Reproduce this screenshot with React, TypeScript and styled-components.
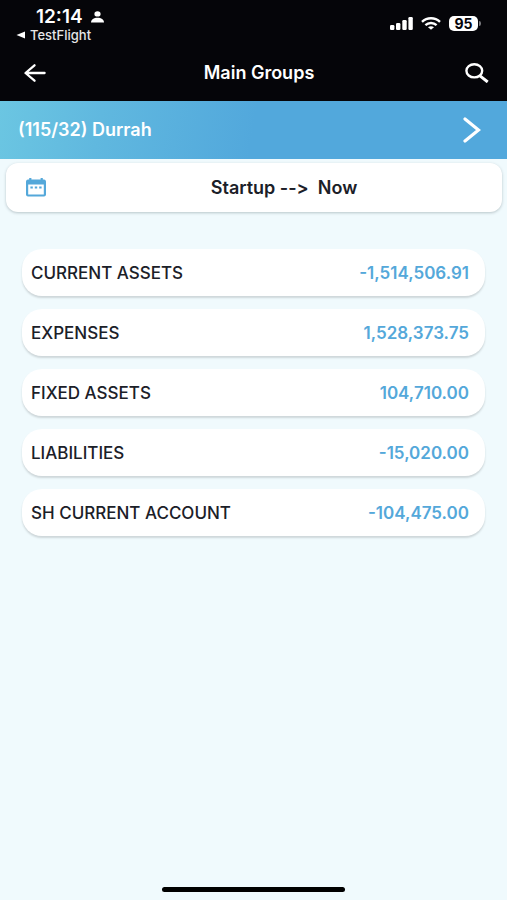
import React from 'react';
import styled, { createGlobalStyle } from 'styled-components';

const GlobalStyle = createGlobalStyle`
  * { box-sizing: border-box; }
  body {
    margin: 0;
    background: #f0fafd;
    font-family: Inter, "Liberation Sans", sans-serif;
    color: #1b2028;
  }
  svg { display: block; }
`;

const PlainButton = styled.button`
  margin: 0;
  padding: 0;
  border: 0;
  background: none;
  font: inherit;
  color: inherit;
  cursor: pointer;
`;

const Screen = styled.div`
  display: flex;
  flex-direction: column;
  min-height: 100vh;
`;

const TopArea = styled.header`
  background: #050509;
  color: #fff;
`;

const StatusBar = styled.div`
  display: flex;
  justify-content: space-between;
  align-items: flex-start;
  height: 45px;
  padding: 7px 26px 0 16px;
`;

const StatusLeft = styled.div`
  display: flex;
  flex-direction: column;
`;

const Clock = styled.div`
  display: flex;
  align-items: center;
  gap: 8px;
  padding-left: 20px;
  font-size: 19px;
  line-height: 20px;
  font-weight: 600;
`;

const BackToApp = styled(PlainButton)`
  display: flex;
  align-items: center;
  gap: 5px;
  font-size: 13px;
  line-height: 16px;
  font-weight: 500;
  color: #e6e6e8;
`;

const StatusRight = styled.div`
  display: flex;
  align-items: center;
  gap: 8px;
  padding-top: 9px;
`;

const Battery = styled.div`
  display: flex;
  align-items: center;
  gap: 1px;
`;

const BatteryLevel = styled.span`
  width: 29px;
  border-radius: 5px;
  background: #fff;
  color: #050509;
  font-size: 14px;
  line-height: 15px;
  font-weight: 700;
  text-align: center;
`;

const BatteryTip = styled.span`
  width: 2px;
  height: 5px;
  border-radius: 0 2px 2px 0;
  background: #77777b;
`;

const NavBar = styled.nav`
  display: grid;
  grid-template-columns: 40px 1fr 40px;
  align-items: center;
  height: 56px;
  padding: 0 10px 0 15px;
`;

const IconButton = styled(PlainButton)`
  display: flex;
  align-items: center;
  justify-content: center;
  height: 40px;
`;

const Title = styled.h1`
  margin: 0;
  padding-left: 6px;
  font-size: 18px;
  line-height: 24px;
  font-weight: 600;
  text-align: center;
`;

const AccountBanner = styled(PlainButton)`
  display: flex;
  align-items: center;
  justify-content: space-between;
  height: 58px;
  padding: 0 26px 0 18px;
  color: #fff;
  background: linear-gradient(100deg, #6bc6e2 0%, #60b8df 20%, #52a8dc 50%, #52a8dc 100%);
`;

const AccountName = styled.span`
  font-size: 18px;
  line-height: 24px;
  font-weight: 600;
`;

const PeriodCard = styled(PlainButton)`
  display: grid;
  grid-template-columns: 22px 1fr;
  align-items: center;
  height: 49px;
  margin: 4px 5px 0 6px;
  padding: 0 20px 0 20px;
  border-radius: 12px;
  background: #fff;
  box-shadow: 0 1px 3px rgba(40, 60, 70, 0.28);
`;

const Period = styled.span`
  padding-left: 38px;
  font-size: 18px;
  line-height: 24px;
  font-weight: 600;
  font-feature-settings: "calt" 0;
  text-align: center;
  white-space: pre;
`;

const GroupList = styled.ul`
  display: flex;
  flex-direction: column;
  gap: 13px;
  margin: 0;
  padding: 37px 22px 24px;
  list-style: none;
`;

const GroupRow = styled(PlainButton)`
  display: flex;
  align-items: center;
  justify-content: space-between;
  width: 100%;
  height: 47px;
  padding: 0 16px 0 9px;
  border-radius: 20px;
  background: #fff;
  box-shadow: 0 2px 2px rgba(40, 50, 50, 0.17);
`;

const GroupName = styled.span`
  font-size: 17px;
  line-height: 24px;
  font-weight: 500;
`;

const Amount = styled.span`
  font-size: 17px;
  line-height: 24px;
  font-weight: 600;
  color: #54a8da;
`;

const HomeIndicator = styled.div`
  width: 36%;
  height: 5px;
  margin: auto auto 8px;
  border-radius: 3px;
  background: #000;
`;

const groups = [
  { name: 'CURRENT ASSETS', amount: '-1,514,506.91' },
  { name: 'EXPENSES', amount: '1,528,373.75' },
  { name: 'FIXED ASSETS', amount: '104,710.00' },
  { name: 'LIABILITIES', amount: '-15,020.00' },
  { name: 'SH CURRENT ACCOUNT', amount: '-104,475.00' },
];

const PersonIcon = () => (
  <svg width="13" height="12" viewBox="0 0 13 12" fill="#fff" aria-hidden="true">
    <ellipse cx="6.5" cy="2.9" rx="3.1" ry="2.7" />
    <path d="M0 11.6C0 8.4 2.8 6.8 6.5 6.8S13 8.4 13 11.6Z" />
  </svg>
);

const BackTriangle = () => (
  <svg width="9" height="8" viewBox="0 0 9 8" fill="#fff" aria-hidden="true">
    <path d="M0.5 4 9 0.4V7.6Z" />
  </svg>
);

const SignalIcon = () => (
  <svg width="23" height="13" viewBox="0 0 23 13" fill="#fff" aria-hidden="true">
    <rect x="0" y="8" width="4.4" height="5" rx="1.2" />
    <rect x="6" y="6" width="4.4" height="7" rx="1.2" />
    <rect x="12.3" y="3" width="4.4" height="10" rx="1.2" />
    <rect x="18.4" y="0" width="4.4" height="13" rx="1.2" />
  </svg>
);

const WifiIcon = () => (
  <svg width="20" height="13" viewBox="0 0 20 13" fill="none" stroke="#fff" strokeWidth="2.4" aria-hidden="true">
    <path d="M1 4.9C6 .1 14 .1 19 4.9" />
    <path d="M4.4 8.2C7.6 5.2 12.4 5.2 15.6 8.2" />
    <path d="M10 12.8 7 10.3C8.7 8.8 11.3 8.8 13 10.3Z" fill="#fff" stroke="none" />
  </svg>
);

const ArrowLeftIcon = () => (
  <svg width="22" height="18" viewBox="0 0 22 18" fill="none" stroke="#fff" strokeWidth="2.3" strokeLinecap="round" strokeLinejoin="round" aria-hidden="true">
    <path d="M10.5 1.3 1.5 9 10.5 16.7M1.8 9H20.6" />
  </svg>
);

const SearchIcon = () => (
  <svg width="24" height="20" viewBox="0 0 24 20" fill="none" stroke="#fff" aria-hidden="true">
    <ellipse cx="9.3" cy="7.8" rx="7.9" ry="6.6" strokeWidth="2.4" />
    <path d="M15 12.8 22.7 19" strokeWidth="3" />
  </svg>
);

const ChevronIcon = () => (
  <svg width="18" height="26" viewBox="0 0 18 26" fill="none" stroke="#fff" strokeWidth="3.2" strokeLinecap="round" strokeLinejoin="miter" aria-hidden="true">
    <path d="M2 2 15.5 13 2 24" />
  </svg>
);

const CalendarIcon = () => (
  <svg width="20" height="19" viewBox="0 0 20 19" aria-hidden="true">
    <path fill="#54a8da" fillRule="evenodd" d="M3.2 0H5.4V1.6H14.6V0H16.8V1.6H18A2 2 0 0 1 20 3.4V16.7A2 2 0 0 1 18 18.5H2A2 2 0 0 1 0 16.7V3.4A2 2 0 0 1 2 1.6H3.2ZM2.2 6.4V16.5H17.8V6.4Z" />
    <path fill="#54a8da" d="M4.4 8.5H6.8V10.4H4.4ZM8.8 8.5H11.2V10.4H8.8ZM13.2 8.5H15.6V10.4H13.2Z" />
  </svg>
);

export default function App() {
  return (
    <Screen>
      <GlobalStyle />
      <TopArea>
        <StatusBar>
          <StatusLeft>
            <Clock>12:14<PersonIcon /></Clock>
            <BackToApp><BackTriangle />TestFlight</BackToApp>
          </StatusLeft>
          <StatusRight>
            <SignalIcon />
            <WifiIcon />
            <Battery><BatteryLevel>95</BatteryLevel><BatteryTip /></Battery>
          </StatusRight>
        </StatusBar>
        <NavBar>
          <IconButton aria-label="Back"><ArrowLeftIcon /></IconButton>
          <Title>Main Groups</Title>
          <IconButton aria-label="Search"><SearchIcon /></IconButton>
        </NavBar>
      </TopArea>
      <AccountBanner>
        <AccountName>(115/32) Durrah</AccountName>
        <ChevronIcon />
      </AccountBanner>
      <PeriodCard>
        <CalendarIcon />
        <Period>{'Startup -->  Now'}</Period>
      </PeriodCard>
      <GroupList>
        {groups.map((group) => (
          <li key={group.name}>
            <GroupRow>
              <GroupName>{group.name}</GroupName>
              <Amount>{group.amount}</Amount>
            </GroupRow>
          </li>
        ))}
      </GroupList>
      <HomeIndicator />
    </Screen>
  );
}
